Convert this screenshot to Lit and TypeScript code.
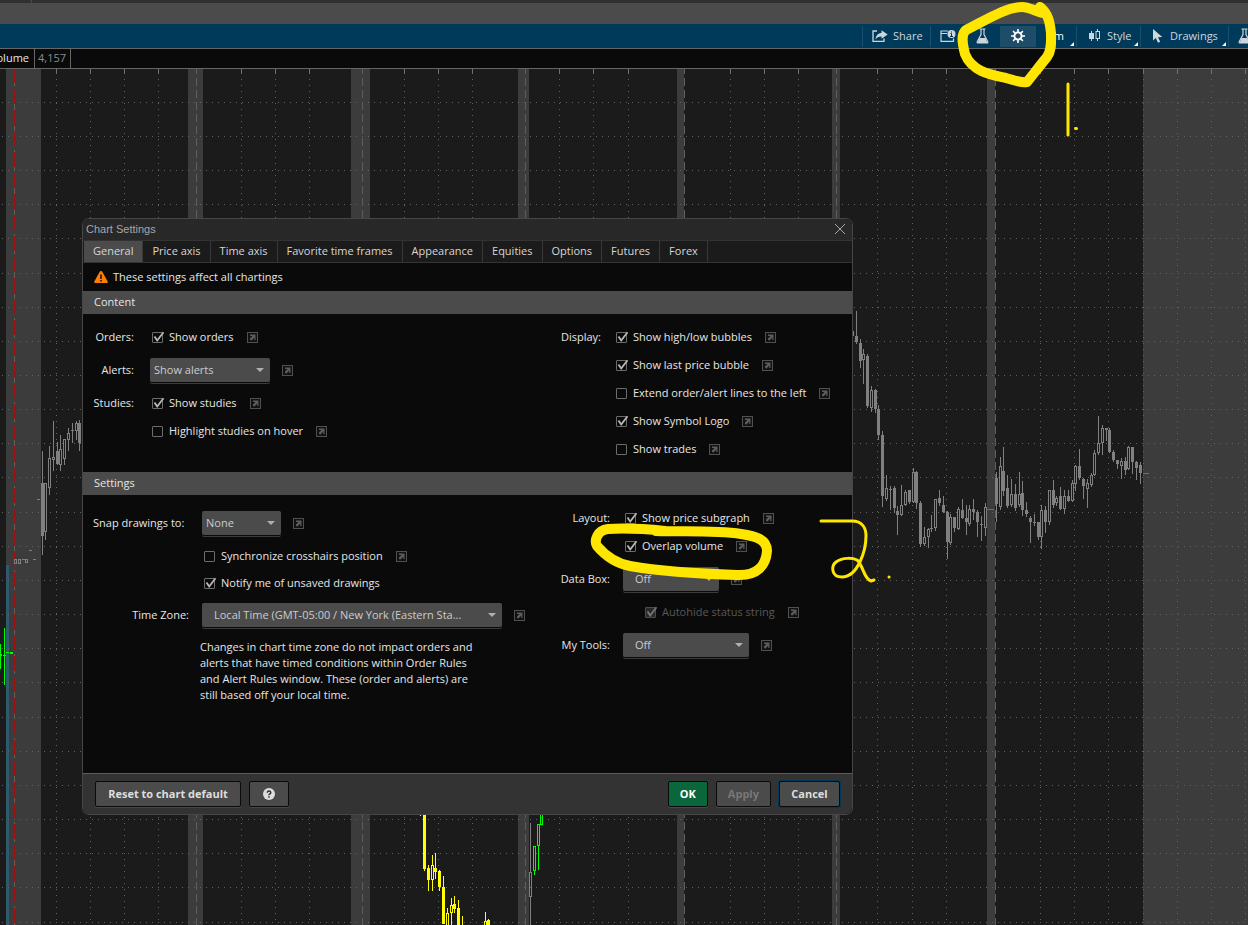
import { LitElement, html, svg, css, nothing } from "lit";
import { customElement } from "lit/decorators.js";

/** x, high, low, body top, body bottom, filled (1) or hollow (0); three units to a pixel. */
type Candle = [number, number, number, number, number, number];

interface Series {
  left: number;
  top: number;
  color: string;
  candles: Candle[];
}

const GRID_X = [56, 90, 124, 158, 241, 275, 309, 404, 438, 472, 559, 593, 628, 730, 764, 798, 877, 912, 946, 1040, 1074, 1108, 1143, 1177, 1211, 1245];
const GRID_Y = [33, 67, 101, 135, 169, 204, 238, 272, 306, 340, 374, 408, 443, 477, 511, 545, 579, 613, 648, 682, 716, 750, 784, 818, 853];
const SESSION_X = [196, 362, 525, 684, 836, 995];
const BANDS: [number, number][] = [[6, 35], [188, 15], [351, 19], [518, 11], [677, 7], [832, 8], [987, 8]];

const SERIES: Series[] = [
  {
    left: 840, top: 221, color: "#808080",
    candles: [
      [38, 102, 205, 125, 140, 1], [49, 64, 163, 138, 156, 1], [61, 148, 235, 160, 215, 1], [70, 178, 284, 192, 212, 0],
      [82, 193, 356, 198, 350, 1], [94, 289, 367, 300, 356, 0], [106, 297, 370, 300, 358, 1], [115, 345, 451, 358, 436, 1],
      [127, 424, 652, 435, 620, 1], [139, 556, 633, 595, 628, 0], [151, 590, 660, 597, 600, 1], [163, 590, 670, 594, 654, 1],
      [172, 650, 736, 663, 677, 1], [184, 586, 678, 646, 677, 0], [196, 602, 650, 606, 646, 0], [208, 600, 642, 601, 638, 1],
      [220, 536, 640, 547, 637, 0], [229, 545, 658, 547, 640, 1], [241, 635, 772, 640, 764, 1], [253, 712, 770, 742, 764, 0],
      [265, 715, 774, 718, 742, 0], [274, 676, 726, 714, 718, 1], [286, 627, 723, 628, 716, 0], [298, 600, 650, 624, 640, 1],
      [310, 620, 671, 646, 668, 1], [322, 664, 808, 667, 758, 1], [331, 673, 765, 682, 760, 0], [343, 681, 727, 682, 716, 1],
      [355, 652, 720, 658, 718, 0], [367, 628, 688, 660, 686, 1], [379, 645, 736, 685, 698, 1], [388, 645, 710, 658, 704, 0],
      [400, 628, 692, 657, 668, 1], [412, 662, 741, 666, 698, 1], [424, 680, 754, 702, 707, 1], [436, 640, 740, 652, 715, 0],
      [469, 548, 696, 566, 642, 1], [481, 502, 660, 528, 653, 0], [490, 472, 620, 544, 605, 1], [502, 556, 656, 594, 650, 1],
      [514, 568, 652, 612, 647, 0], [526, 583, 665, 614, 654, 1], [538, 547, 652, 612, 647, 0], [547, 574, 680, 610, 660, 1],
      [559, 636, 683, 660, 674, 1], [571, 678, 759, 684, 698, 1], [583, 672, 708, 697, 701, 1], [595, 696, 750, 697, 742, 1],
      [604, 647, 778, 660, 743, 0], [616, 650, 731, 660, 697, 1], [628, 600, 705, 601, 697, 0], [640, 570, 656, 601, 645, 1],
      [649, 620, 650, 624, 640, 0], [661, 592, 660, 618, 658, 1], [673, 602, 672, 618, 658, 0], [685, 600, 636, 619, 634, 1],
      [697, 572, 637, 580, 635, 0], [706, 527, 603, 528, 584, 0], [718, 478, 570, 528, 564, 1], [730, 566, 628, 567, 590, 1],
      [742, 568, 654, 580, 597, 0], [754, 550, 592, 556, 586, 0], [763, 480, 560, 490, 556, 0], [775, 379, 497, 460, 490, 0],
      [787, 405, 495, 415, 460, 0], [799, 414, 455, 415, 422, 1], [808, 414, 490, 420, 486, 1], [820, 481, 517, 487, 512, 1],
      [832, 510, 538, 511, 522, 1], [844, 506, 569, 515, 530, 0], [856, 502, 556, 515, 542, 1], [865, 469, 540, 472, 538, 0],
      [877, 471, 552, 472, 518, 1], [889, 515, 570, 517, 536, 1], [901, 517, 583, 526, 550, 1],
    ],
  },
  {
    left: 0, top: 331, color: "#808080",
    candles: [
      [136, 249, 422, 249, 398, 0], [127, 153, 467, 250, 410, 1], [148, 138, 287, 175, 266, 0], [160, 64, 215, 172, 180, 0],
      [172, 127, 196, 154, 192, 1], [181, 105, 215, 148, 197, 0], [193, 117, 195, 118, 178, 0], [205, 84, 155, 100, 122, 0],
      [217, 69, 130, 91, 95, 1], [229, 63, 120, 69, 94, 0], [238, 60, 155, 69, 129, 1],
      [46, 478, 492, 478, 492, 0], [58, 478, 492, 478, 492, 0], [79, 478, 489, 478, 489, 0],
      [70, 478, 480, 477, 480, 1], [103, 478, 480, 477, 480, 1], [91, 451, 453, 450, 453, 1], [115, 298, 300, 297, 300, 1],
    ],
  },
  {
    left: 0, top: 331, color: "#00ff00",
    candles: [[1, 732, 808, 764, 770, 0], [13, 684, 857, 765, 768, 1], [22, 757, 759, 756, 759, 1], [34, 756, 762, 756, 762, 1]],
  },
  {
    left: 80, top: 696, color: "#ffff00",
    candles: [
      [1021, 120, 155, 120, 140, 1], [1033, 120, 320, 120, 312, 1], [1045, 300, 378, 309, 345, 1], [1057, 270, 378, 300, 347, 0],
      [1066, 265, 342, 309, 323, 1], [1078, 317, 378, 318, 368, 1], [1090, 333, 477, 367, 477, 1], [1102, 430, 500, 444, 500, 0],
      [1114, 399, 500, 420, 446, 0], [1123, 393, 444, 418, 434, 1], [1135, 405, 500, 429, 500, 1], [1147, 454, 500, 490, 500, 1],
      [1216, 441, 500, 468, 500, 0], [1225, 462, 500, 465, 500, 1],
    ],
  },
  {
    left: 460, top: 696, color: "#00ff00",
    candles: [[223, 243, 332, 244, 320, 0], [235, 178, 317, 178, 244, 0], [244, 120, 180, 120, 180, 0]],
  },
  { left: 460, top: 696, color: "#808080", candles: [[211, 175, 500, 322, 398, 0]] },
];

const px = (units: number) => Math.floor(units / 3);

function drawCandle([x, high, low, top, bottom, filled]: Candle) {
  const cx = px(x);
  const bodyTop = px(top);
  const bodyHeight = Math.max(1, px(bottom) - bodyTop);
  const upper = bodyTop - px(high);
  const lower = px(low) - bodyTop - bodyHeight;
  return svg`
    ${upper > 0 ? svg`<rect x=${cx} y=${px(high)} width="1" height=${upper} />` : nothing}
    ${filled
      ? svg`<rect x=${cx - 1} y=${bodyTop} width="3" height=${bodyHeight} />`
      : svg`<path fill-rule="evenodd" d=${`M${cx - 1} ${bodyTop}h3v${bodyHeight}h-3zM${cx} ${bodyTop + 1}v${bodyHeight - 2}h1v-${bodyHeight - 2}z`} />`}
    ${lower > 0 ? svg`<rect x=${cx} y=${bodyTop + bodyHeight} width="1" height=${lower} />` : nothing}`;
}

@customElement("price-chart")
export class PriceChart extends LitElement {
  static styles = css`
    :host { display: block; overflow: hidden; background: #1b1b1b; }
    .plot { display: block; width: 100%; height: 100%; }
    .band { fill: #3c3c3c; }
    .volume { fill: #2f5a6e; }
    .dots { stroke: #626262; stroke-dasharray: 1 5; }
    .tick { fill: #707070; }
    .session { stroke: #5e5e5e; stroke-dasharray: 8 4; }
    .cursor { stroke: #9c1212; stroke-dasharray: 15 6; }
  `;

  render() {
    return html`
      <svg class="plot" shape-rendering="crispEdges" aria-hidden="true">
        ${BANDS.map(([x, w]) => svg`<rect class="band" x=${x} y="0" width=${w} height="100%" />`)}
        <rect class="band" x="1143" y="0" width="100%" height="100%" />
        <rect class="volume" x="6" y="496" width="3" height="100%" />
        ${GRID_Y.map((y) => svg`<line class="dots" x1="2" x2="100%" y1=${y + 0.5} y2=${y + 0.5} />`)}
        ${GRID_X.map((x) => svg`
          <line class="dots" x1=${x + 0.5} x2=${x + 0.5} y1="10" y2="100%" />
          <rect class="tick" x=${x} y="0" width="1" height="5" />`)}
        ${SESSION_X.map((x) => svg`<line class="session" x1=${x + 0.5} x2=${x + 0.5} y1="-3" y2="100%" />`)}
        <line class="session" x1="14.5" x2="14.5" y1="-3" y2="100%" />
        <line class="cursor" x1="14.5" x2="14.5" y1="-1" y2="100%" />
        ${SERIES.map((s) => svg`<g fill=${s.color} transform=${`translate(${s.left} ${s.top})`}>${s.candles.map(drawCandle)}</g>`)}
        <path d="M986 440.500h8M1143 404.500h6" stroke="#6e6e6e" />
      </svg>`;
  }
}

const flaskIcon = html`
  <svg class="icon" width="13" height="16" viewBox="0 0 13 16" aria-hidden="true">
    <path d="M3.500 1h6M5 1v5.500L1.300 13.500q-.5 1.500.7 1.500h9q1.200 0 .7-1.500L8 6.500V1" fill="none" stroke="currentColor" stroke-width="1.200" />
    <path d="M3.500 10h6l2 5h-10z" fill="currentColor" />
  </svg>`;

@customElement("chart-toolbar")
export class ChartToolbar extends LitElement {
  static styles = css`
    :host { display: flex; justify-content: flex-end; height: 24px; background: #003a5a; color: #ccd6dc; overflow: hidden; }
    .tool {
      display: flex; align-items: center; flex: none; box-sizing: border-box; gap: 5px; position: relative;
      margin: 2px 0 1px; padding: 0 9px 2px; border: 0; border-right: 1px solid #1c4f6c; background: none;
      color: inherit; font: 11px/15px "Open Sans", "Noto Sans", sans-serif;
    }
    .bare { border: 0; padding: 0 0 1px; width: 36px; justify-content: center; }
    .share { width: 69px; border-left: 1px solid #1c4f6c; }
    .events { width: 33px; }
    .active { background: #1d4d69; color: #fff; }
    .frame { width: 41px; padding-right: 12px; justify-content: flex-end; color: #fff; }
    .style { width: 64px; padding-left: 12px; gap: 6px; }
    .drawings { width: 88px; padding-left: 11px; gap: 7px; }
    .last { width: 19px; justify-content: flex-start; padding-left: 9px; }
    .icon { display: block; flex: none; }
    .corner { position: absolute; right: 2px; bottom: 1px; border: 2px solid; border-color: transparent #fff #fff transparent; }
  `;

  render() {
    return html`
      <button class="tool share">
        <svg class="icon" width="16" height="12" viewBox="0 0 16 12" aria-hidden="true">
          <path d="M5 1H1v10.300h11V8.500" fill="none" stroke="currentColor" stroke-width="1.300" />
          <path d="M9.500 0.300 15.700 4.500 9.500 8.700V6.400Q5.500 6.200 3.500 9.500 4 3.300 9.500 2.700z" fill="currentColor" />
        </svg>
        Share
      </button>
      <button class="tool bare events" aria-label="Events">
        <svg class="icon" width="16" height="12" viewBox="0 0 16 12" aria-hidden="true">
          <path d="M8 1H1v10.300h12.500V8.500M1 3.500h6" fill="none" stroke="currentColor" stroke-width="1.200" />
          <circle cx="11.500" cy="4" r="4" fill="currentColor" />
          <path d="M11.500 1.500v1M10.500 3.500h1v3M10 6.500h3" stroke="#003a5a" fill="none" />
        </svg>
      </button>
      <button class="tool bare" aria-label="Studies">${flaskIcon}</button>
      <button class="tool bare active" aria-label="Chart settings">
        <svg class="icon" width="14" height="14" viewBox="-7 -7 14 14" aria-hidden="true">
          <circle r="3.600" fill="none" stroke="currentColor" stroke-width="1.900" />
          <path d="M0-7v3M0 4v3M-7 0h3M4 0h3M-4.900-4.900l2 2M2.900 2.900l2 2M-4.900 4.900l2-2M2.900-2.900l2-2" stroke="currentColor" stroke-width="1.600" />
        </svg>
      </button>
      <button class="tool frame">m<span class="corner"></span></button>
      <button class="tool style">
        <svg class="icon" width="12" height="13" viewBox="0 0 12 13" aria-hidden="true" fill="currentColor">
          <path d="M2 2h1v2h2v6H3v2H2v-2H0V4h2z" />
          <path fill-rule="evenodd" d="M8 0h1v2h2v8H9v2H8v-2H6.500V2H8zM7.500 3v6H10V3z" />
        </svg>
        Style<span class="corner"></span>
      </button>
      <button class="tool drawings">
        <svg class="icon" width="11" height="14" viewBox="0 0 11 14" aria-hidden="true">
          <path d="M1 0v11.500l2.800-2.500 2.200 4.800 2.200-1L6 8.300l4.300-.3z" fill="currentColor" />
        </svg>
        Drawings<span class="corner"></span>
      </button>
      <button class="tool bare last" aria-label="Studies menu">${flaskIcon}</button>`;
  }
}

@customElement("settings-dialog")
export class SettingsDialog extends LitElement {
  static styles = css`
    :host {
      display: block; box-sizing: border-box; overflow: hidden; color: #e6e6e6; background: #0a0a0a;
      border: 1px solid #464646; border-radius: 7px; font: 11px/16px "Open Sans", "Noto Sans", sans-serif;
    }
    .title {
      display: flex; align-items: center; justify-content: space-between; box-sizing: border-box; height: 21px; padding: 0 7px 2px 3px;
      background: #282828; color: #a6a6a6; font: 11px/14px "Liberation Sans", Arial, sans-serif;
    }
    .heading { margin: 0; font: inherit; }
    .plain { display: block; padding: 0; border: 0; background: none; color: inherit; line-height: 0; }
    .tabs { display: flex; border: solid #333; border-width: 1px 0; padding-left: 1px; background: #1b1b1b; }
    .tab { height: 21px; padding: 0 9px 2px; border: 0; border-right: 1px solid #383838; background: none; color: #d6d6d6; font: inherit; white-space: nowrap; }
    .selected { background: #4b4b4b; }
    .notice { display: flex; align-items: center; gap: 5px; height: 28px; padding-left: 11px; }
    .section { margin: 0; padding: 0 11px; height: 23px; font: inherit; line-height: 22px; background: #4b4b4b; box-sizing: border-box; }
    .panels { display: grid; grid-template-columns: 1fr 292px; padding: 9px 0 9px 10px; }
    .tall { padding-bottom: 70px; }
    .fields { display: grid; grid-template-columns: 41px 1fr; column-gap: 13px; align-content: start; }
    .roomy { grid-template-columns: 41px 1fr; column-gap: 16px; }
    .long { grid-template-columns: 96px 1fr; }
    .medium { grid-template-columns: 50px 1fr; }
    .name { display: flex; align-items: center; justify-content: flex-end; white-space: nowrap; }
    .start { justify-content: flex-start; }
    .cell { grid-column: 2; display: flex; align-items: center; gap: 13px; height: 28px; }
    .pick { height: 38px; gap: 12px; }
    .tight { height: 26px; }
    .indent { padding-left: 20px; }
    .check { display: flex; align-items: center; gap: 6px; padding-left: 2px; white-space: nowrap; }
    .tick { display: grid; width: 11px; height: 11px; }
    .box { grid-area: 1 / 1; appearance: none; width: 11px; height: 11px; margin: 0; border: 1px solid #6c6c6c; border-radius: 1px; background: #0a0a0a; }
    .mark { grid-area: 1 / 1; display: none; overflow: visible; pointer-events: none; color: #b8b8b8; }
    .box:checked + .mark { display: block; }
    .off { color: #585858; }
    .off .box { background: #2a2a2a; border-color: #4c4c4c; }
    .off .mark { color: #777; }
    .combo { display: grid; align-items: center; }
    .select {
      grid-area: 1 / 1; appearance: none; height: 24px; width: 100%; margin: 0; padding: 0 22px 0 4px; border: 0; border-radius: 2px;
      background: #4b4b4b; color: #ccc; font: inherit; text-overflow: ellipsis; box-shadow: 0 1px 0 #0a0a0a, 0 2px 0 #3c3c3c;
    }
    .inset { padding-left: 12px; }
    .arrow { grid-area: 1 / 1; justify-self: end; margin-right: 6px; pointer-events: none; }
    .w120 { width: 120px; }
    .w79 { width: 79px; }
    .w300 { width: 300px; }
    .w96 { width: 96px; }
    .w126 { width: 126px; }
    .hint { grid-column: 2; margin: 5px 0 0 -2px; max-width: 288px; }
    .footer { display: flex; gap: 8px; height: 41px; box-sizing: border-box; padding: 7px 12px; border-top: 1px solid #5c5c5c; background: #333; }
    .button {
      display: flex; align-items: center; justify-content: center; height: 26px; box-sizing: border-box; padding: 0 11px; border: 1px solid #0a0a0a;
      border-radius: 2px; background: #4b4b4b; color: #dedede; font: bold 11px/16px "Open Sans", "Noto Sans", sans-serif; box-shadow: 0 1px 0 #484848;
    }
    .reset { min-width: 146px; }
    .help { width: 40px; }
    .ok { width: 40px; margin-left: auto; background: #0a673c; color: #fff; }
    .button:disabled { color: #777; }
    .cancel { min-width: 61px; box-shadow: 0 0 0 1px #003a5a; }
  `;

  private link(name: string) {
    return html`
      <button class="plain" aria-label=${`Open ${name}`}>
        <svg width="11" height="11" viewBox="0 0 11 11" aria-hidden="true">
          <rect x=".5" y=".5" width="10" height="10" fill="#121212" stroke="#505050" />
          <path d="M3 2.500h5.500V8H7.300V5.500L4.500 8.500 3 8V6.500L5.500 4H3z" fill="#5c5c5c" />
        </svg>
      </button>`;
  }

  private check(id: string, text: string, checked: boolean, opts: { row?: string; link?: boolean; disabled?: boolean } = {}) {
    return html`
      <div class="cell ${opts.row ?? ""}">
        <label class="check ${opts.disabled ? "off" : ""}" for=${id}>
          <span class="tick">
            <input class="box" id=${id} type="checkbox" ?checked=${checked} ?disabled=${opts.disabled ?? false} />
            <svg class="mark" width="11" height="11" viewBox="0 0 11 11" aria-hidden="true">
              <path d="M2.500 4.500 5.200 8.500 11.500 0.200" fill="none" stroke="currentColor" stroke-width="1.800" />
            </svg>
          </span>
          ${text}
        </label>
        ${opts.link === false ? nothing : this.link(text)}
      </div>`;
  }

  private combo(id: string, value: string, width: string, inset = false) {
    return html`
      <div class="cell pick">
        <span class="combo ${width}">
          <select class="select ${inset ? "inset" : ""}" id=${id}><option>${value}</option></select>
          <svg class="arrow" width="8" height="4" viewBox="0 0 8 4" aria-hidden="true"><path d="M0 0h8L4 4z" fill="#b0b0b0" /></svg>
        </span>
        ${this.link(value)}
      </div>`;
  }

  render() {
    const tabs = ["General", "Price axis", "Time axis", "Favorite time frames", "Appearance", "Equities", "Options", "Futures", "Forex"];
    return html`
      <header class="title">
        <h1 class="heading">Chart Settings</h1>
        <button class="plain" aria-label="Close">
          <svg width="10" height="10" viewBox="0 0 10 10" aria-hidden="true"><path d="M0 0l10 10M10 0L0 10" stroke="#a6a6a6" /></svg>
        </button>
      </header>
      <nav class="tabs" role="tablist">
        ${tabs.map((t, i) => html`<button class="tab ${i === 0 ? "selected" : ""}" role="tab" aria-selected=${i === 0 ? "true" : "false"}>${t}</button>`)}
      </nav>
      <div class="notice">
        <svg width="14" height="12" viewBox="0 0 14 12" aria-hidden="true">
          <path d="M7 0q.9 0 1.300.8l5.400 9.700q.5 1.500-.9 1.500H1.200q-1.400 0-.9-1.500L5.700.8Q6.100 0 7 0z" fill="#ff7d05" />
          <path d="M7 3.500v4.500M7 9v1.500" stroke="#1b1b1b" stroke-width="1.600" />
        </svg>
        These settings affect all chartings
      </div>
      <h2 class="section">Content</h2>
      <div class="panels">
        <div class="fields roomy">
          <span class="name">Orders:</span>${this.check("orders", "Show orders", true)}
          <label class="name" for="alerts">Alerts:</label>${this.combo("alerts", "Show alerts", "w120")}
          <span class="name">Studies:</span>${this.check("studies", "Show studies", true)}
          ${this.check("highlight", "Highlight studies on hover", false)}
        </div>
        <div class="fields">
          <span class="name">Display:</span>${this.check("bubbles", "Show high/low bubbles", true)}
          ${this.check("last", "Show last price bubble", true)}
          ${this.check("extend", "Extend order/alert lines to the left", false)}
          ${this.check("logo", "Show Symbol Logo", true)}
          ${this.check("trades", "Show trades", false)}
        </div>
      </div>
      <h2 class="section">Settings</h2>
      <div class="panels tall">
        <div class="fields long">
          <label class="name start" for="snap">Snap drawings to:</label>${this.combo("snap", "None", "w79")}
          ${this.check("sync", "Synchronize crosshairs position", false)}
          ${this.check("notify", "Notify me of unsaved drawings", true, { row: "tight", link: false })}
          <label class="name" for="zone">Time Zone:</label>${this.combo("zone", "Local Time (GMT-05:00 / New York (Eastern Sta...", "w300", true)}
          <p class="hint">Changes in chart time zone do not impact orders and alerts that have timed conditions within Order Rules and Alert Rules window. These (order and alerts) are still based off your local time.</p>
        </div>
        <div class="fields medium">
          <span class="name">Layout:</span>${this.check("subgraph", "Show price subgraph", true)}
          ${this.check("overlap", "Overlap volume", true)}
          <label class="name" for="databox">Data Box:</label>${this.combo("databox", "Off", "w96", true)}
          ${this.check("autohide", "Autohide status string", true, { row: "indent", disabled: true })}
          <label class="name" for="tools">My Tools:</label>${this.combo("tools", "Off", "w126", true)}
        </div>
      </div>
      <footer class="footer">
        <button class="button reset">Reset to chart default</button>
        <button class="button help" aria-label="Help">
          <svg width="12" height="12" viewBox="0 0 12 12" aria-hidden="true">
            <circle cx="6" cy="6" r="6" fill="#dedede" />
            <path d="M4.200 4.700Q4.300 3 6 3t1.800 1.500Q7.800 5.500 6.800 6T6 7.300M6 8.200v1.500" fill="none" stroke="#333" stroke-width="1.500" />
          </svg>
        </button>
        <button class="button ok">OK</button>
        <button class="button" disabled>Apply</button>
        <button class="button cancel">Cancel</button>
      </footer>`;
  }
}

@customElement("app-root")
export class AppRoot extends LitElement {
  static styles = css`
    :host {
      display: flex; flex-direction: column; position: relative; height: 100vh; overflow: hidden;
      background: #1b1b1b; font: 11px/15px "Open Sans", "Noto Sans", sans-serif;
    }
    .strip { display: flex; flex: none; height: 3px; background: #303030; }
    .stub { width: 31px; border-right: 1px solid #4b4b4b; }
    .bar { flex: none; height: 21px; background: #4b4b4b; }
    .toolbar { flex: none; }
    .status { display: flex; flex: none; height: 19px; border: solid #666; border-width: 1px 0; background: #0a0a0a; line-height: 18px; }
    .label { display: flex; justify-content: flex-end; box-sizing: border-box; width: 35px; padding-right: 5px; overflow: hidden; border-right: 1px solid #666; color: #e6e6e6; }
    .value { box-sizing: border-box; padding: 0 4px 0 3px; border-right: 1px solid #666; color: #8c8c8c; }
    .chart { flex: 1; min-height: 0; }
    .dialog { position: absolute; left: 82px; top: 218px; width: 771px; }
    .notes { position: absolute; inset: 0; width: 100%; height: 100%; pointer-events: none; }
    .pen { fill: none; stroke: #ffe600; stroke-linecap: round; stroke-linejoin: round; }
  `;

  render() {
    return html`
      <div class="strip"><span class="stub"></span></div>
      <div class="bar"></div>
      <chart-toolbar class="toolbar"></chart-toolbar>
      <div class="status"><span class="label">Volume</span><span class="value">4,157</span></div>
      <price-chart class="chart"></price-chart>
      <settings-dialog class="dialog" role="dialog" aria-label="Chart Settings"></settings-dialog>
      <svg class="notes" aria-hidden="true">
        <g class="pen" stroke-width="10">
          <path d="M1044 13C1036 12 1030 7 1022 7 1006 7 986 20 966 30 961 34 962 42 965 54 972 72 992 75 1006 78 1014 80 1020 83 1027 82 1032 76 1038 68 1047 57 1052 50 1051 42 1051 33 1050 24 1049 14 1040 7" />
          <path d="M665 531C645 529 625 528 608 529 597 530 594 541 597 546 603 553 614 563 630 566 665 572 705 574 737 575 758 576 766 565 767 551 767 539 755 536 741 534 715 530 685 532 656 531" />
        </g>
        <g class="pen" stroke-width="3">
          <path d="M1068 84v51M1075.500 128.500h1" />
          <path d="M821 521h31C862 521 866 528 866 536 866 550 858 577 842 577 831 577 831 566 836 562 843 557 853 558 857 560 863 565 864 579 871 581L874 580M889 577h.1" />
        </g>
      </svg>`;
  }
}
